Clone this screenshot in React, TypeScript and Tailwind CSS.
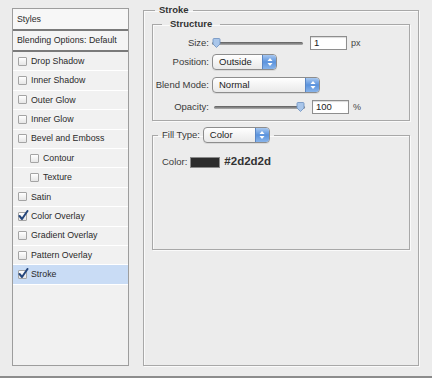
import type { ReactNode } from "react";

type StyleRow = { label: string; checked?: boolean; indent?: boolean; active?: boolean };

const styleRows: StyleRow[] = [
    { label: "Drop Shadow" },
    { label: "Inner Shadow" },
    { label: "Outer Glow" },
    { label: "Inner Glow" },
    { label: "Bevel and Emboss" },
    { label: "Contour", indent: true },
    { label: "Texture", indent: true },
    { label: "Satin" },
    { label: "Color Overlay", checked: true },
    { label: "Gradient Overlay" },
    { label: "Pattern Overlay" },
    { label: "Stroke", checked: true, active: true },
];

function Checkbox({ checked }: { checked?: boolean }) {
    return (
        <span className="relative inline-block h-[9px] w-[9px] shrink-0 rounded-[1px] border border-[#a4a4a4] bg-gradient-to-b from-white to-[#e6e6e6]">
            {checked ? (
                <svg className="absolute -left-[1px] -top-[3px]" width="11" height="11" viewBox="0 0 11 11">
                    <path d="M1.5 6 L4 9 L9.5 1" fill="none" stroke="#24467c" strokeWidth="2" strokeLinecap="round" strokeLinejoin="round" />
                </svg>
            ) : null}
        </span>
    );
}

function SelectBox({ value, width }: { value: string; width: string }) {
    return (
        <div className={`flex h-[16px] ${width} items-stretch overflow-hidden rounded-[4px] border border-[#8d8d8d] bg-gradient-to-b from-white to-[#e9e9e9] shadow-[0_1px_0_rgba(0,0,0,0.08)]`}>
            <span className="flex flex-1 items-center pl-[6px] text-[9.5px] text-[#222]">{value}</span>
            <span className="flex w-[14px] items-center justify-center border-l border-[#5a86c4] bg-gradient-to-b from-[#a8c8f0] via-[#5b93dd] to-[#88b4ea]">
                <svg width="6" height="10" viewBox="0 0 6 10">
                    <path d="M3 1 L5.5 4 L0.5 4 Z" fill="#fff" />
                    <path d="M3 9 L5.5 6 L0.5 6 Z" fill="#fff" />
                </svg>
            </span>
        </div>
    );
}

function Slider({ knobAt }: { knobAt: "start" | "end" }) {
    return (
        <div className="relative flex h-[14px] w-[91px] items-center">
            <div className="h-[3px] w-full rounded-full bg-gradient-to-b from-[#5c5c5c] to-[#b0b0b0]" />
            <svg className={`absolute top-[2px] ${knobAt === "start" ? "left-0" : "right-0"}`} width="9" height="10" viewBox="0 0 9 10">
                <path d="M1 1.5 Q1 0.5 2 0.5 L7 0.5 Q8 0.5 8 1.5 L8 6 L4.5 9.5 L1 6 Z" fill="#a9c6ea" stroke="#6b8fbf" strokeWidth="0.8" />
            </svg>
        </div>
    );
}

function NumberInput({ value, unit }: { value: string; unit: string }) {
    return (
        <div className="ml-[7px] flex items-center gap-[4px]">
            <div className="flex h-[14px] w-[37px] items-center border border-[#8e8e8e] bg-white pl-[3px] text-[9.5px] text-[#222] shadow-[inset_0_1px_1px_rgba(0,0,0,0.15)]">{value}</div>
            <span className="text-[9px] text-[#444]">{unit}</span>
        </div>
    );
}

function FieldRow({ label, children, className }: { label: string; children: ReactNode; className: string }) {
    return (
        <div className={`flex items-center ${className}`}>
            <span className="w-[56px] shrink-0 text-right text-[9.5px] text-[#3a3a3a]">{label}</span>
            <div className="ml-[3px] flex items-center">{children}</div>
        </div>
    );
}

export default function App() {
    return (
        <div className="relative h-[378px] w-[432px] overflow-hidden bg-[#ececec] leading-none" style={{ fontFamily: '"Liberation Sans", Arial, sans-serif' }}>
            <div className="flex items-start pl-[12px] pt-[4px]">
                {/* styles list */}
                <div className="mt-[4px] h-[358px] w-[117px] border border-[#9d9d9d] bg-[#f1f1f1]">
                    <div className="flex h-[22px] items-center border-b-2 border-[#7a7a7a] bg-[#f7f7f7] pl-[4px] text-[8.8px] text-[#2a2a2a]">Styles</div>
                    <div className="flex h-[21px] items-center border-b-2 border-[#7a7a7a] bg-[#f4f4f4] pl-[4px] text-[8.8px] text-[#2a2a2a]">Blending Options: Default</div>
                    {styleRows.map((row) => (
                        <div
                            key={row.label}
                            className={`flex h-[19.4px] items-center gap-[4px] border-b border-white text-[8.8px] text-[#2a2a2a] ${row.indent ? "pl-[17px]" : "pl-[5px]"} ${row.active ? "bg-[#c9dcf5]" : "bg-[#f1f1f1]"}`}
                        >
                            <Checkbox checked={row.checked} />
                            <span>{row.label}</span>
                        </div>
                    ))}
                </div>

                {/* stroke options */}
                <fieldset className="ml-[14px] w-[276px] border border-[#a8a8a8] px-[8px] shadow-[1px_1px_0_#fafafa,inset_1px_1px_0_#fafafa]">
                    <legend className="ml-[3px] h-[12px] px-[4px] text-[9.5px] font-bold leading-[12px] text-[#333]">Stroke</legend>

                    <fieldset className="mt-[2px] border border-[#a8a8a8] pb-[6px] shadow-[1px_1px_0_#fafafa,inset_1px_1px_0_#fafafa]">
                        <legend className="ml-[9px] h-[12px] px-[8px] text-[9.5px] font-bold leading-[12px] text-[#333]">Structure</legend>
                        <FieldRow label="Size:" className="mt-[6px] h-[14px]">
                            <Slider knobAt="start" />
                            <NumberInput value="1" unit="px" />
                        </FieldRow>
                        <FieldRow label="Position:" className="mt-[4px] h-[16px]">
                            <SelectBox value="Outside" width="w-[65px]" />
                        </FieldRow>
                        <FieldRow label="Blend Mode:" className="mt-[7px] h-[16px]">
                            <SelectBox value="Normal" width="w-[108px]" />
                        </FieldRow>
                        <FieldRow label="Opacity:" className="mt-[7px] h-[14px]">
                            <div className="ml-[2px] flex items-center">
                                <Slider knobAt="end" />
                                <NumberInput value="100" unit="%" />
                            </div>
                        </FieldRow>
                    </fieldset>

                    <fieldset className="mt-[6px] border border-[#a8a8a8] shadow-[1px_1px_0_#fafafa,inset_1px_1px_0_#fafafa]">
                        <legend className="ml-[5px] flex h-[16px] items-center gap-[3px] px-[4px]">
                            <span className="text-[9.5px] text-[#3a3a3a]">Fill Type:</span>
                            <SelectBox value="Color" width="w-[67px]" />
                        </legend>
                        <div className="h-[106px] pl-[9px] pt-[13px]">
                            <div className="flex h-[12px] items-center">
                                <span className="text-[9.5px] text-[#3a3a3a]">Color:</span>
                                <span className="ml-[3px] h-[11px] w-[30px] border border-[#8a8a8a] bg-[#2d2d2d]" />
                                <span className="ml-[4px] text-[11.5px] font-bold text-[#333]">#2d2d2d</span>
                            </div>
                        </div>
                    </fieldset>

                    <div className="h-[115px]" />
                </fieldset>
            </div>

            <div className="absolute bottom-0 left-0 h-[2px] w-full bg-[#8c8c8c]" />
        </div>
    );
}
